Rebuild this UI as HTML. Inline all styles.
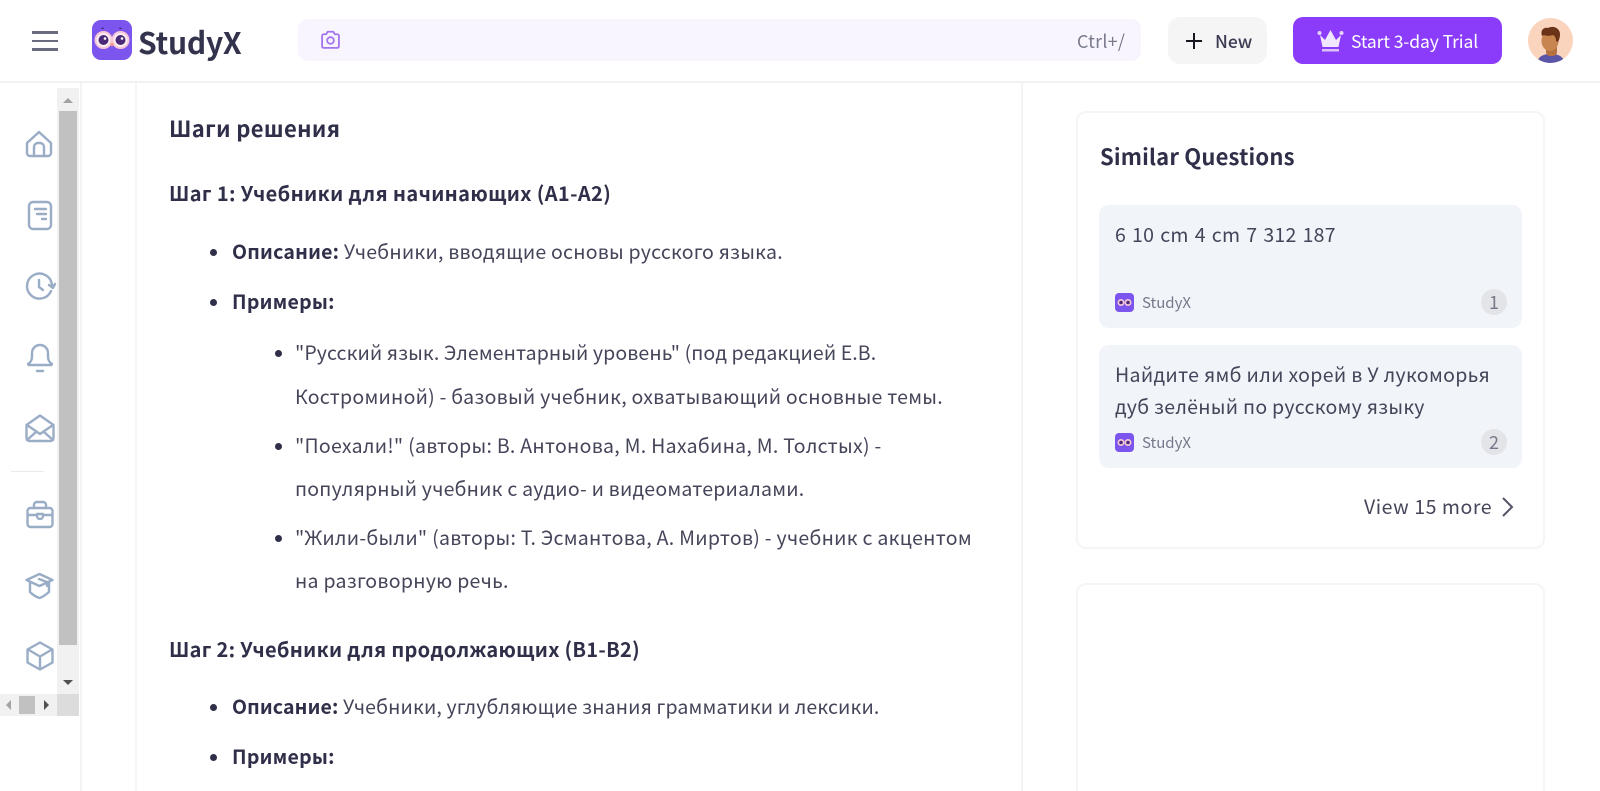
<!DOCTYPE html>
<html><head><meta charset="utf-8"><style>
html,body{margin:0;padding:0;width:1600px;height:791px;overflow:hidden;background:#fff}
body{position:relative;font-family:"Noto Sans CJK JP","Liberation Sans",sans-serif;color:#3b3b52}
.a{position:absolute}
.t{position:absolute;white-space:nowrap;line-height:30px;font-size:19.5px;letter-spacing:.28px;color:#45455a}
.t b{font-weight:700;color:#2f2f4a}
.t.h{font-weight:700;color:#2f2f4a;font-size:20px;letter-spacing:.37px}
.d{position:absolute;width:7px;height:7px;border-radius:50%;background:#2f2f4a}
svg{position:absolute;overflow:visible}
.ic{fill:none;stroke:#9aadc6;stroke-width:2.4;stroke-linecap:round;stroke-linejoin:round}
</style></head><body>
<!-- header -->
<div class="a" style="left:0;top:81px;width:1600px;height:2px;background:#f1f2f4"></div>
<div class="a" style="left:32px;top:31px;width:26px;height:2.5px;background:#6b6b80"></div>
<div class="a" style="left:32px;top:39.5px;width:26px;height:2.5px;background:#6b6b80"></div>
<div class="a" style="left:32px;top:48px;width:26px;height:2.5px;background:#6b6b80"></div>
<svg style="left:92px;top:20px" width="40" height="40" viewBox="0 0 40 40"><rect width="40" height="40" rx="9" fill="#7c55ee"/><path d="M9 9l2-2 1 2zM30 9l-2-2-1 2z" fill="#4a2a78"/><circle cx="11.500" cy="20" r="9" fill="#f7c6d6"/><circle cx="28.500" cy="20" r="9" fill="#f7c6d6"/><circle cx="11.500" cy="20" r="7" fill="#fbeef2"/><circle cx="28.500" cy="20" r="7" fill="#fbeef2"/><circle cx="11.500" cy="20" r="5" fill="#4a2a78"/><circle cx="28.500" cy="20" r="5" fill="#4a2a78"/><circle cx="13" cy="18.500" r="1.300" fill="#fff"/><circle cx="30" cy="18.500" r="1.300" fill="#fff"/><path d="M18 23l2 4 2-4z" fill="#f2a07a"/></svg>
<div class="t" style="left:138px;top:20px;font-size:30px;line-height:42px;font-weight:700;color:#33334d;letter-spacing:-.2px">StudyX</div>
<div class="a" style="left:298px;top:19px;width:843px;height:42px;border-radius:10px;background:#f8f5ff"></div>
<svg style="left:320px;top:29px" width="21" height="21" viewBox="0 0 20 20" fill="none" stroke="#a474f0" stroke-width="1.700" stroke-linejoin="round"><path d="M2 6.500a1.500 1.500 0 0 1 1.500-1.500H6l1.200-2.400h5.600L14 5h2.500a1.500 1.500 0 0 1 1.500 1.500v10a1.500 1.500 0 0 1-1.500 1.500h-13A1.500 1.500 0 0 1 2 16.500z"/><circle cx="10" cy="11" r="3.200"/></svg>
<div class="t" style="left:1077px;top:26px;font-size:18px;letter-spacing:.2px;color:#7b7b8c">Ctrl+/</div>
<div class="a" style="left:1168px;top:17px;width:99px;height:47px;border-radius:12px;background:#f5f5f6"></div>
<svg style="left:1185px;top:32px" width="18" height="18" viewBox="0 0 18 18"><path d="M9 1v16M1 9h16" stroke="#17171f" stroke-width="2"/></svg>
<div class="t" style="left:1215px;top:27px;font-size:17.500px;letter-spacing:0;font-weight:500;color:#3b3b52">New</div>
<div class="a" style="left:1293px;top:17px;width:209px;height:47px;border-radius:10px;background:#8b3cfb"></div>
<svg style="left:1317px;top:27px" width="27" height="26" viewBox="0 0 27 26"><path d="M3 8l5 5 5.500-10 5.500 10 5-5-2.500 12h-16z" fill="#f1e6ff"/><rect x="5" y="22" width="17" height="2.500" fill="#d9c0fb"/><circle cx="2.500" cy="6" r="2" fill="#e4d1ff"/><circle cx="24.500" cy="6" r="2" fill="#e4d1ff"/></svg>
<div class="t" style="left:1351px;top:27px;font-size:17.500px;letter-spacing:-.1px;color:#fff">Start 3-day Trial</div>
<svg style="left:1528px;top:18px" width="45" height="45" viewBox="0 0 45 45"><clipPath id="c"><circle cx="22.500" cy="22.500" r="22.500"/></clipPath><g clip-path="url(#c)"><rect width="45" height="45" fill="#fbd4bd"/><path d="M9 45c1-7 7-9 14-9s12 2 14 9z" fill="#5a55a6"/><rect x="18" y="26" width="11" height="12" rx="4" fill="#b5713f"/><ellipse cx="22" cy="23" rx="8.500" ry="10" fill="#c98550"/><path d="M14 18c-2-6 2-9 6-8 5-3 12 0 12 6 0 4-1 6-2 8l-2-1c0-3-1-5-3-6-3 1-7 1-9 0z" fill="#6b3418"/></g></svg>
<!-- sidebar -->
<div class="a" style="left:80px;top:83px;width:2px;height:708px;background:#f3f4f6"></div>
<div class="a" style="left:135px;top:83px;width:2px;height:708px;background:#f3f5f7"></div>
<div class="a" style="left:1021px;top:83px;width:2px;height:708px;background:#f3f4f6"></div>
<div class="a" style="left:57px;top:88px;width:22px;height:606px;background:#f1f1f1"></div>
<div class="a" style="left:59px;top:111px;width:18px;height:534px;background:#c1c1c1"></div>
<svg style="left:57px;top:88px" width="22" height="22"><path d="M6 15l5-5 5 5z" fill="#a3a3a3"/></svg>
<svg style="left:57px;top:672px" width="22" height="22"><path d="M6 8l5 5 5-5z" fill="#505050"/></svg>
<div class="a" style="left:0;top:694px;width:57px;height:22px;background:#f1f1f1"></div>
<div class="a" style="left:57px;top:694px;width:22px;height:22px;background:#dcdcdc"></div>
<div class="a" style="left:19px;top:696px;width:16px;height:18px;background:#c1c1c1"></div>
<svg style="left:0;top:694px" width="57" height="22"><path d="M11 6l-5 5 5 5z" fill="#a3a3a3"/><path d="M44 6l5 5-5 5z" fill="#505050"/></svg>
<svg class="ic" style="left:25px;top:130px" width="28" height="28" viewBox="0 0 28 28"><path d="M2 13L14 2l12 11v10a3 3 0 0 1-3 3H5a3 3 0 0 1-3-3z"/><path d="M9 26v-9a4 4 0 0 1 4-4h2a4 4 0 0 1 4 4v9"/></svg>
<svg class="ic" style="left:27px;top:201px" width="26" height="28" viewBox="0 0 26 28"><rect x="2" y="1" width="22" height="27" rx="4"/><path d="M8 8h11M10 13h9M15 18h4"/></svg>
<svg class="ic" style="left:26px;top:272px" width="30" height="28" viewBox="0 0 30 28"><path d="M25 19a12.500 12.500 0 1 1 1-5"/><path d="M13 8v7l4 3"/><path d="M23 13l4 3 2-4" fill="#9aadc6"/></svg>
<svg class="ic" style="left:26px;top:343px" width="28" height="30" viewBox="0 0 28 30"><path d="M2 21c3-2 4-4 4-8V10a8 8 0 0 1 16 0v3c0 4 1 6 4 8 0 0 0 1-1 1H3c-1 0-1-1-1-1z"/><path d="M11 28h6"/></svg>
<svg class="ic" style="left:25px;top:414px" width="30" height="28" viewBox="0 0 30 28"><path d="M1.500 11L15 1.500 28.500 11v13a3 3 0 0 1-3 3h-21a3 3 0 0 1-3-3z"/><path d="M2 11l13 9 13-9M2 26l9-8M28 26l-9-8"/></svg>
<div class="a" style="left:11px;top:471px;width:33px;height:1px;background:#e8eaed"></div>
<svg class="ic" style="left:26px;top:501px" width="28" height="27" viewBox="0 0 28 27"><rect x="1.500" y="7" width="25" height="19" rx="3"/><path d="M8 7V4a3 3 0 0 1 3-3h6a3 3 0 0 1 3 3v3M2 14h9M17 14h9"/><path d="M11 13h6v2a3 3 0 0 1-6 0z"/></svg>
<svg class="ic" style="left:25px;top:572px" width="29" height="27" viewBox="0 0 29 27"><path d="M1.500 8L14.500 2l13 6-13 6z"/><path d="M5 11v9c3 3 6 5 9.500 6 3.500-1 6-3 9.500-6v-9"/><path d="M14 7l8 3v4"/></svg>
<svg class="ic" style="left:25px;top:641px" width="30" height="30" viewBox="0 0 30 30"><path d="M15 1.500l12.500 7v13L15 28.500 2.500 21.500v-13z"/><path d="M3 8.500l12 7 12-7M15 15.500v12.500"/></svg>
<!-- main -->
<div class="t h" style="left:169px;top:113px;font-size:22px;letter-spacing:.36px">Шаги решения</div>
<div class="t h" style="left:169px;top:178px">Шаг 1: Учебники для начинающих (А1-А2)</div>
<div class="d" style="left:210px;top:249px"></div>
<div class="t" style="left:232px;top:236px;letter-spacing:.23px"><b>Описание:</b> Учебники, вводящие основы русского языка.</div>
<div class="d" style="left:210px;top:299px"></div>
<div class="t" style="left:232px;top:286px"><b>Примеры:</b></div>
<div class="d" style="left:275px;top:350px"></div>
<div class="t" style="left:295px;top:337px;letter-spacing:.1px">"Русский язык. Элементарный уровень" (под редакцией Е.В.</div>
<div class="t" style="left:295px;top:381px;letter-spacing:.25px">Костроминой) - базовый учебник, охватывающий основные темы.</div>
<div class="d" style="left:275px;top:443px"></div>
<div class="t" style="left:295px;top:430px">"Поехали!" (авторы: В. Антонова, М. Нахабина, М. Толстых) -</div>
<div class="t" style="left:295px;top:473px;letter-spacing:.22px">популярный учебник с аудио- и видеоматериалами.</div>
<div class="d" style="left:275px;top:535px"></div>
<div class="t" style="left:295px;top:522px">"Жили-были" (авторы: Т. Эсмантова, А. Миртов) - учебник с акцентом</div>
<div class="t" style="left:295px;top:565px">на разговорную речь.</div>
<div class="t h" style="left:169px;top:634px;letter-spacing:.29px">Шаг 2: Учебники для продолжающих (В1-В2)</div>
<div class="d" style="left:210px;top:704px"></div>
<div class="t" style="left:232px;top:691px;letter-spacing:.14px"><b>Описание:</b> Учебники, углубляющие знания грамматики и лексики.</div>
<div class="d" style="left:210px;top:754px"></div>
<div class="t" style="left:232px;top:741px"><b>Примеры:</b></div>
<!-- right -->
<div class="a" style="left:1076px;top:111px;width:469px;height:438px;box-sizing:border-box;border:2px solid #f4f5f7;border-radius:10px"></div>
<div class="a" style="left:1076px;top:583px;width:469px;height:240px;box-sizing:border-box;border:2px solid #f4f5f7;border-radius:10px"></div>
<div class="t h" style="left:1100px;top:141px;font-size:22px;letter-spacing:.18px">Similar Questions</div>
<div class="a" style="left:1099px;top:205px;width:423px;height:123px;border-radius:10px;background:#f1f4f9"></div>
<div class="t" style="left:1115px;top:219px;word-spacing:1.300px">6 10 cm 4 cm 7 312 187</div>
<svg style="left:1115px;top:293px" width="19" height="19" viewBox="0 0 19 19"><rect width="19" height="19" rx="4" fill="#7c55ee"/><circle cx="6" cy="9.500" r="3.500" fill="#f3c6d6"/><circle cx="13" cy="9.500" r="3.500" fill="#f3c6d6"/><circle cx="6" cy="9.500" r="1.800" fill="#4a2a78"/><circle cx="13" cy="9.500" r="1.800" fill="#4a2a78"/></svg>
<div class="t" style="left:1142px;top:288px;font-size:15px;letter-spacing:0;color:#77778a">StudyX</div>
<div class="a" style="left:1481px;top:289px;width:26px;height:26px;border-radius:50%;background:#e3e4e7;text-align:center;line-height:26px;font-size:18px;color:#77778a">1</div>
<div class="a" style="left:1099px;top:345px;width:423px;height:123px;border-radius:10px;background:#f1f4f9"></div>
<div class="t" style="left:1115px;top:359px;letter-spacing:.34px">Найдите ямб или хорей в У лукоморья</div>
<div class="t" style="left:1115px;top:391px">дуб зелёный по русскому языку</div>
<svg style="left:1115px;top:433px" width="19" height="19" viewBox="0 0 19 19"><rect width="19" height="19" rx="4" fill="#7c55ee"/><circle cx="6" cy="9.500" r="3.500" fill="#f3c6d6"/><circle cx="13" cy="9.500" r="3.500" fill="#f3c6d6"/><circle cx="6" cy="9.500" r="1.800" fill="#4a2a78"/><circle cx="13" cy="9.500" r="1.800" fill="#4a2a78"/></svg>
<div class="t" style="left:1142px;top:428px;font-size:15px;letter-spacing:0;color:#77778a">StudyX</div>
<div class="a" style="left:1481px;top:429px;width:26px;height:26px;border-radius:50%;background:#e3e4e7;text-align:center;line-height:26px;font-size:18px;color:#77778a">2</div>
<div class="t" style="left:1364px;top:491px;letter-spacing:.55px">View 15 more</div>
<svg style="left:1500px;top:496px" width="14" height="22" viewBox="0 0 14 22"><path d="M3 2l9 9-9 9" fill="none" stroke="#55556a" stroke-width="2"/></svg>
</body></html>
